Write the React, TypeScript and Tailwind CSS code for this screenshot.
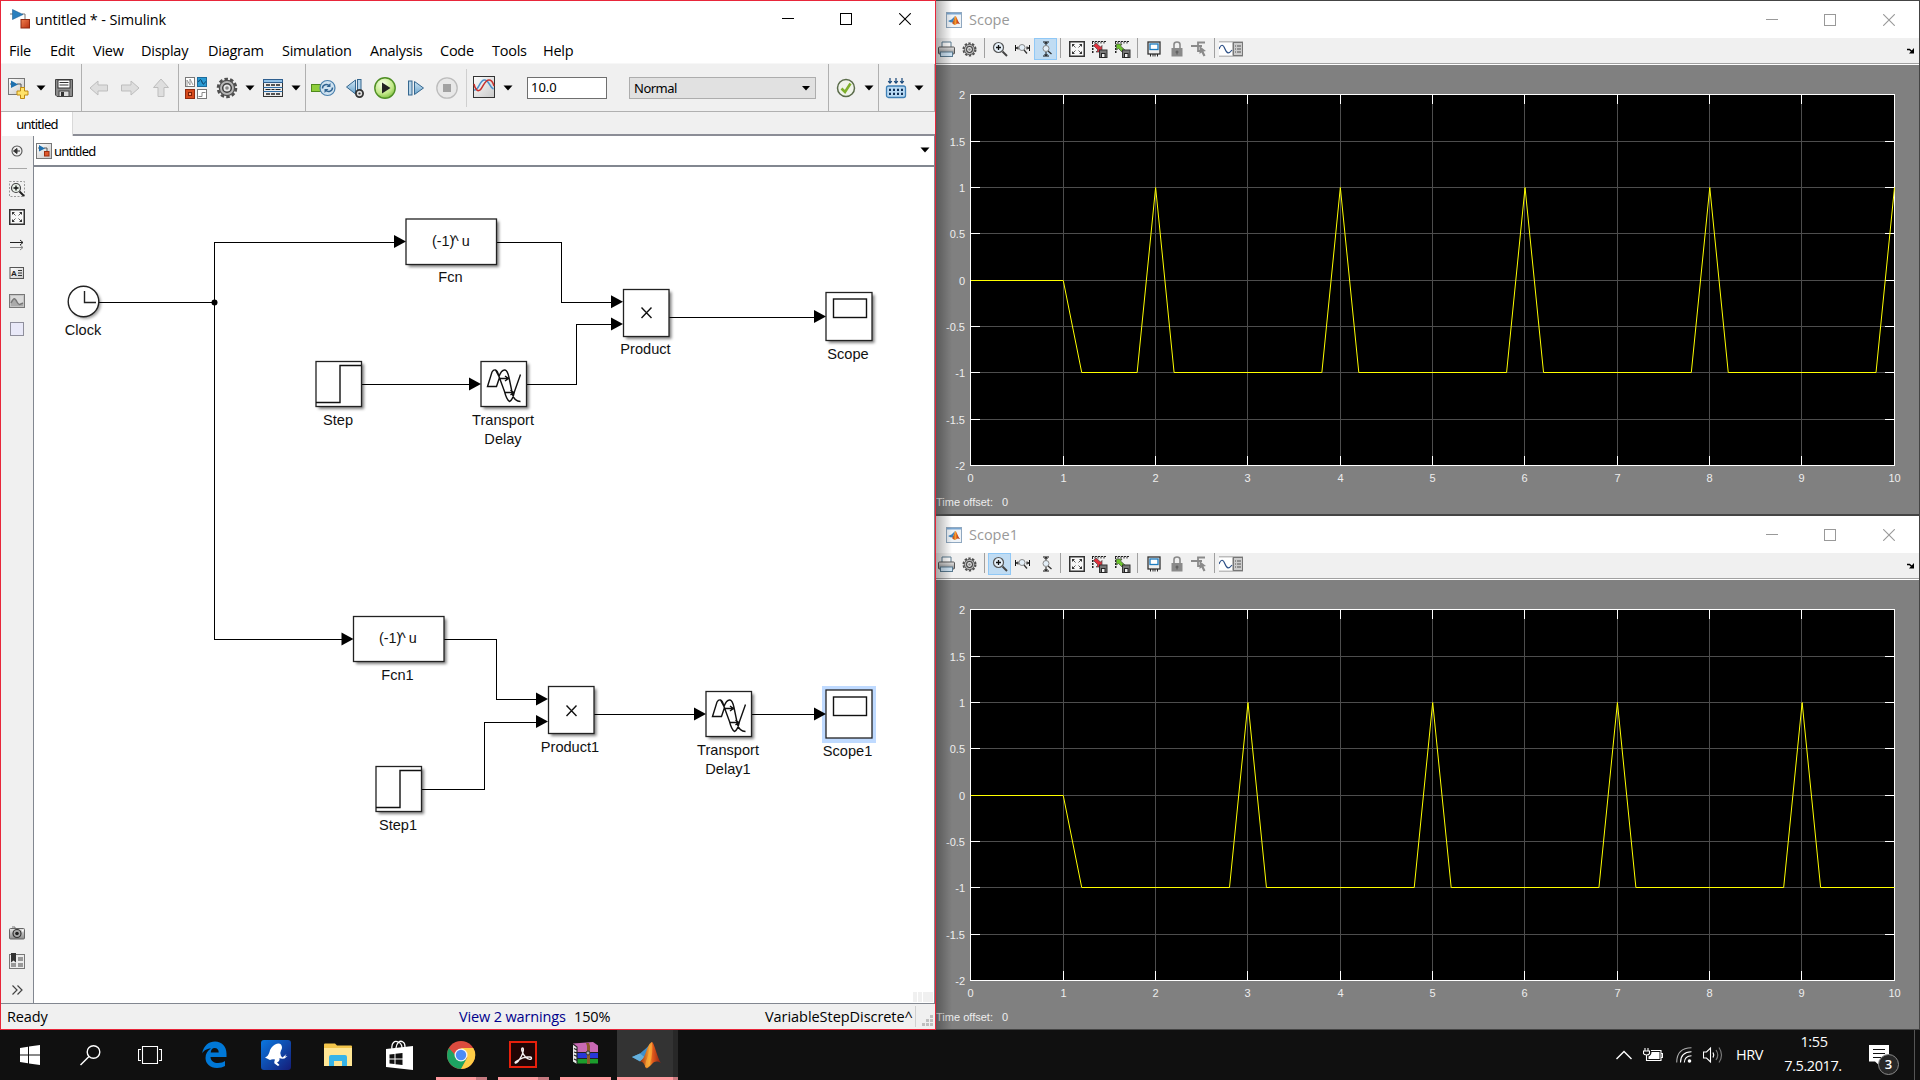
import React from "react";

type P = { className?: string };

const Caret = ({ className = "" }: P) => (
  <svg className={`shrink-0 ${className}`} width="10" height="6" viewBox="0 0 10 6">
    <path d="M0.5 0.5h9L5 5.5z" fill="#000" />
  </svg>
);

const Icon = ({ w, h, className = "", children }: { w: number; h: number; className?: string; children: React.ReactNode }) => (
  <svg className={`shrink-0 ${className}`} width={w} height={h} viewBox={`0 0 ${w} ${h}`} fill="none">
    {children}
  </svg>
);

const Defs = () => (
  <svg width="0" height="0" className="absolute">
    <defs>
      <linearGradient id="paper" x1="0" y1="0" x2="1" y2="1"><stop offset="0" stopColor="#fff" /><stop offset="1" stopColor="#c8c8c8" /></linearGradient>
      <linearGradient id="blue" x1="0" y1="0" x2="0" y2="1"><stop offset="0" stopColor="#cfe6f5" /><stop offset="1" stopColor="#6aa3cb" /></linearGradient>
      <linearGradient id="orange" x1="0" y1="0" x2="1" y2="1"><stop offset="0" stopColor="#f08050" /><stop offset="1" stopColor="#b83010" /></linearGradient>
      <linearGradient id="gray" x1="0" y1="0" x2="0" y2="1"><stop offset="0" stopColor="#e8e8e8" /><stop offset="1" stopColor="#8a8a8a" /></linearGradient>
      <radialGradient id="green" cx=".4" cy=".3" r=".8"><stop offset="0" stopColor="#f6ffe8" /><stop offset=".6" stopColor="#c3e889" /><stop offset="1" stopColor="#6db52a" /></radialGradient>
      <linearGradient id="flame" x1="0" y1="0" x2="1" y2="0"><stop offset="0" stopColor="#a02a10" /><stop offset=".45" stopColor="#f5a030" /><stop offset=".6" stopColor="#e05a1c" /><stop offset="1" stopColor="#8c1c10" /></linearGradient>
      <linearGradient id="fish" x1="0" y1="0" x2="1" y2="1"><stop offset="0" stopColor="#0a78e0" /><stop offset="1" stopColor="#151c78" /></linearGradient>
    </defs>
  </svg>
);

const SimulinkLogo = () => (
  <Icon w={20} h={20}>
    <path d="M12 5h3v6" stroke="#777" />
    <path d="M0 5h3" stroke="#777" />
    <path d="M2.500 .5L13 5.500 2.500 10.500z" fill="#2a7fbe" stroke="#1c5f96" strokeWidth=".6" />
    <rect x="11" y="10.500" width="8.500" height="8.500" fill="url(#orange)" stroke="#8f2810" />
  </Icon>
);

const MiniModel = () => (
  <Icon w={16} h={16}>
    <rect x=".5" y=".5" width="15" height="15" fill="url(#paper)" stroke="#777" />
    <path d="M2 5h2M8 5h3v4" stroke="#555" />
    <path d="M3 2l6 3.500L3 8.500z" fill="#1d6fae" />
    <rect x="8.500" y="8.500" width="4.500" height="4.500" fill="#e0582c" stroke="#9c2f10" />
  </Icon>
);

const WindowControls = ({ color, className = "" }: { color: string; className?: string }) => (
  <div className={`flex items-center gap-[46px] ${className}`}>
    <Icon w={12} h={12}><path d="M0 5.500h12" stroke={color} /></Icon>
    <Icon w={12} h={12}><rect x=".5" y=".5" width="11" height="11" stroke={color} /></Icon>
    <Icon w={12} h={12} className="ml-px"><path d="M.2 .2l11.600 11.600M11.800 .2L.2 11.800" stroke={color} strokeWidth="1.100" /></Icon>
  </div>
);

const Gear = ({ s }: { s: number }) => (
  <svg width={s} height={s} viewBox="0 0 22 22" className="shrink-0" fill="none">
    <circle cx="11" cy="11" r="9" stroke="#4f4f4f" strokeWidth="2.600" strokeDasharray="3.500 2.155" />
    <circle cx="11" cy="11" r="7.600" fill="#b5b5b5" stroke="#4f4f4f" strokeWidth="1.300" />
    <circle cx="11" cy="11" r="4.300" fill="#e8e8e8" stroke="#3f3f3f" strokeWidth="1.500" />
    <circle cx="11" cy="11" r="1.800" fill="#888" />
  </svg>
);

const menus: [string, string][] = [
  ["File", "w-[41px]"], ["Edit", "w-[43px]"], ["View", "w-[48px]"], ["Display", "w-[67px]"], ["Diagram", "w-[74px]"],
  ["Simulation", "w-[88px]"], ["Analysis", "w-[70px]"], ["Code", "w-[52px]"], ["Tools", "w-[51px]"], ["Help", "w-[40px]"],
];

const Toolbar = () => (
  <div className="flex h-[49px] shrink-0 items-stretch border-b border-[#b0b0b0] border-t border-t-[#f7f7f7] bg-[#f0f0f0] [&>div]:flex [&>div]:items-center [&>div]:border-[#b0b0b0] [&>div]:pt-px">
    <div className="w-[81px] border-r">
      <Icon w={24} h={22} className="ml-[5px]">
        <rect x="2.500" y="1.500" width="16" height="16" fill="url(#paper)" stroke="#777" />
        <path d="M4 7h3M11 7h4v4" stroke="#555" />
        <path d="M5 3.500l7 4-7 3.500z" fill="#1d6fae" />
        <path d="M14.500 10.500h4v3.500h3.500v4h-3.500v3.500h-4V18H11v-4h3.500z" fill="#ffe36a" stroke="#c08a10" />
      </Icon>
      <Caret className="ml-[6px]" />
      <Icon w={20} h={20} className="ml-[8px]">
        <path d="M1.500 1.500h17v17H3l-1.500-1.500z" fill="#8c8c8c" stroke="#444" />
        <rect x="4" y="2" width="12" height="8" fill="#fff" stroke="#333" />
        <path d="M5.500 4.500h9M5.500 7h9" stroke="#333" strokeWidth="1.200" />
        <rect x="5" y="13" width="10" height="5.500" fill="#ddd" stroke="#444" />
        <rect x="7" y="14" width="3" height="4" fill="#333" />
      </Icon>
    </div>
    <div className="w-[97px] border-r">
      <Icon w={20} h={20} className="ml-[7px]"><path d="M1 10l8-7v4h9.500v6H9v4z" fill="#dedede" stroke="#bdbdbd" /></Icon>
      <Icon w={20} h={20} className="ml-[11px]"><path d="M19 10l-8-7v4H1.500v6H11v4z" fill="#dedede" stroke="#bdbdbd" /></Icon>
      <Icon w={20} h={20} className="ml-[11px]"><path d="M10 1l7.500 8.500H13v9H7v-9H2.500z" fill="#dedede" stroke="#bdbdbd" /></Icon>
    </div>
    <div className="w-[127px] border-r">
      <Icon w={24} h={24} className="ml-[5px]">
        <rect x="1.500" y="1.500" width="9" height="9" fill="#fff" stroke="#777" /><path d="M3 10V4l3 5V3l3 6" stroke="#999" />
        <rect x="13.500" y="1.500" width="9" height="9" fill="#2b9bd4" stroke="#1c6b9c" /><path d="M14.500 6c1.500-3.500 2.500-3 3.500 0s2 2.500 3.500-.5" stroke="#0a3a60" />
        <rect x="1.500" y="13.500" width="9" height="9" fill="#d64a1c" stroke="#8f2a10" /><rect x="4.500" y="16.500" width="3" height="3" fill="#ff9a70" stroke="#7a2008" />
        <rect x="13.500" y="13.500" width="9" height="9" fill="#fff" stroke="#777" /><path d="M14.500 20.500h3.500v-4h3.500" stroke="#888" />
      </Icon>
      <span className="ml-[8px]"><Gear s={22} /></span>
      <Caret className="ml-[7px]" />
      <Icon w={22} h={20} className="ml-[7px]">
        <rect x="1.500" y="1.500" width="19" height="17" fill="#ececec" stroke="#333" />
        <rect x="1.500" y="1.500" width="19" height="3" fill="#8fc0e6" stroke="#2f5f8f" />
        <path d="M4 7h4M9 7h4M14 7h4M4 16h4M9 16h4M14 16h4" stroke="#222" strokeWidth="1.400" />
        <path d="M1.500 9.500h19M1.500 13.500h19" stroke="#2f6fa8" />
        <path d="M3.500 11.500h5M9.500 11.500h3M13.500 11.500h5" stroke="#222" strokeWidth="1.200" />
      </Icon>
      <Caret className="ml-[7px]" />
    </div>
    <div className="w-[523px] border-r">
      <Icon w={26} h={22} className="ml-[4px]">
        <rect x="1.500" y="7.500" width="12" height="7" fill="#8fce3c" stroke="#4f8a1c" />
        <circle cx="17.500" cy="11" r="7.500" fill="#cfe2f0" stroke="#4a80ad" strokeWidth="1.200" />
        <path d="M12.500 11.500c0-4 4.500-5 7-2.500M22.500 10.500c0 4-4.500 5-7 2.500" stroke="#2f6391" strokeWidth="1.500" />
        <path d="M20.500 6v4h-4zM14.500 16v-4h4z" fill="#2f6391" />
      </Icon>
      <Icon w={22} h={22} className="ml-[9px]">
        <path d="M10.500 3v14L1.500 10z" fill="url(#blue)" stroke="#35678f" />
        <rect x="12.500" y="2.500" width="3.500" height="15" fill="#b5d3e8" stroke="#35678f" />
        <circle cx="14.500" cy="16.500" r="3.600" fill="#ddd" stroke="#333" strokeWidth="1.800" /><circle cx="14.500" cy="16.500" r="1.100" fill="#333" />
      </Icon>
      <Icon w={22} h={22} className="ml-[7px]">
        <circle cx="11" cy="11" r="10.200" fill="url(#green)" stroke="#4f8f24" strokeWidth="1.400" />
        <path d="M8 5.500l8.500 5.500L8 16.500z" fill="#222" />
      </Icon>
      <Icon w={18} h={20} className="ml-[11px]">
        <rect x="1.500" y="3" width="3.500" height="14" fill="#b5d3e8" stroke="#35678f" />
        <path d="M7.500 3.500v13l9-6.500z" fill="url(#blue)" stroke="#35678f" />
      </Icon>
      <Icon w={22} h={22} className="ml-[11px]">
        <circle cx="11" cy="11" r="10.200" fill="#e8e8e8" stroke="#bcbcbc" strokeWidth="1.300" />
        <rect x="7" y="7" width="8" height="8" fill="#a2a2a2" />
      </Icon>
      <span className="ml-[8px] h-[38px] w-px bg-[#cfcfcf]" />
      <Icon w={22} h={22} className="mb-[2px] ml-[6px]">
        <rect x=".5" y=".5" width="21" height="21" fill="url(#paper)" stroke="#333" />
        <path d="M1 14c5 1 5-9 10-10s5 7 9.500 9" stroke="#4a90cc" strokeWidth="1.500" />
        <path d="M1 8c1 5 4 9 7 5s4-9 8-9 4 4 5 6" stroke="#c8302c" strokeWidth="1.500" />
      </Icon>
      <Caret className="ml-[8px]" />
      <div className="ml-[14px] flex h-[22px] w-[80px] items-center border border-[#6f6f6f] bg-white pl-[3px] font-['Noto_Sans'] text-[13px]">10.0</div>
      <div className="ml-[22px] flex h-[22px] w-[187px] items-center justify-between border border-[#adadad] bg-[#e1e1e1] pl-[4px] pr-[5px] font-['Noto_Sans'] text-[13px]">
        <span className="mt-px tracking-[-0.5px]">Normal</span>
        <svg width="8" height="5" viewBox="0 0 8 5"><path d="M0 0h8L4 4.500z" /></svg>
      </div>
    </div>
    <div className="w-[50px] border-r">
      <Icon w={20} h={20} className="ml-[7px]">
        <circle cx="10" cy="10" r="8.500" fill="#f0f4ea" stroke="#5a6b4a" strokeWidth="1.500" />
        <path d="M5.500 10.500l3.500 3.500 5.500-8.500" stroke="#7fb02c" strokeWidth="2.600" />
      </Icon>
      <Caret className="ml-[8px]" />
    </div>
    <div className="flex-1 border-r">
      <Icon w={22} h={22} className="ml-[6px]">
        <path d="M5 1v4M11 1v4M17 1v4M3.200 4.200L5 6.200l1.800-2M9.200 4.200l1.800 2 1.800-2M15.200 4.200l1.800 2 1.800-2" stroke="#17477a" strokeWidth="1.200" />
        <rect x="1.500" y="9" width="19" height="11.500" rx="2" fill="#b9d9f2" stroke="#3e7fb5" strokeWidth="1.300" />
        <path d="M4 12.800h14M4 16.800h14" stroke="#0f3057" strokeWidth="2.200" strokeDasharray="2 2" />
      </Icon>
      <Caret className="ml-[7px]" />
    </div>
  </div>
);

const FitBox = () => (
  <>
    <rect x=".75" y=".75" width="14.500" height="14.500" fill="#f8f8f8" stroke="#333" strokeWidth="1.500" />
    <path d="M3 3h3L3 6zM13 3v3l-3-3zM3 13v-3l3 3zM13 13h-3l3-3z" fill="#333" />
    <path d="M4 4l2.500 2.500M12 4L9.500 6.500M4 12l2.500-2.500M12 12L9.500 9.500" stroke="#333" strokeWidth=".8" />
  </>
);

const Palette = () => (
  <div className="flex w-[32px] shrink-0 flex-col items-center bg-[#f0f0f0]">
    <Icon w={12} h={12} className="mt-[9px]"><circle cx="6" cy="6" r="5" stroke="#555" strokeWidth="1.100" /><path d="M9 6H5M6 3.500v5L2.500 6z" stroke="#333" fill="#333" /></Icon>
    <span className="mt-[11px] h-px w-[19px] bg-[#a8a8a8]" />
    <Icon w={16} h={16} className="mt-[12px]">
      <rect x=".5" y=".5" width="15" height="15" stroke="#999" strokeDasharray="2 1.500" />
      <circle cx="7" cy="7" r="4.500" fill="#e8f0e8" stroke="#444" strokeWidth="1.200" /><path d="M10.500 10.500l4.500 4.500" stroke="#222" strokeWidth="2" /><path d="M4.500 7h5M7 4.500v5" stroke="#111" strokeWidth="1.300" />
    </Icon>
    <Icon w={16} h={16} className="mt-[12px]"><FitBox /></Icon>
    <Icon w={16} h={16} className="mt-[12px]">
      <path d="M1 5.500h13M11 3l3 2.500L11 8" stroke="#222" /><path d="M1 10.500h13M11 8l3 2.500-3 2.500" stroke="#888" />
    </Icon>
    <Icon w={16} h={16} className="mt-[12px]">
      <rect x="1" y="2.500" width="13.500" height="11" fill="url(#paper)" stroke="#555" />
      <text x="2" y="11" fontSize="8" fontWeight="700" fill="#222" fontFamily="Liberation Sans, sans-serif">A</text>
      <path d="M9 5.500h4M9 8h4M9 10.500h4" stroke="#333" />
    </Icon>
    <Icon w={16} h={16} className="mt-[12px]">
      <rect x=".5" y="1.500" width="15" height="13" fill="#c4c4c4" stroke="#777" /><rect x="2" y="3" width="12" height="10" fill="#d9d9d9" /><path d="M2 10c3-6 4-5 6-1s4 2 6 1v3H2z" fill="#aaa" /><path d="M2 10c3-6 4-5 6-1s4 2 6 1" stroke="#777" strokeWidth="1.500" />
    </Icon>
    <span className="mt-[13px] h-[14px] w-[14px] border border-[#8f8f9c] bg-[#e9e9f8]" />
    <Icon w={16} h={14} className="mt-auto">
      <path d="M3 1h3v1.500" stroke="#777" /><rect x=".5" y="2.500" width="15" height="10.500" rx="1" fill="url(#gray)" stroke="#666" /><circle cx="8" cy="7.500" r="4" fill="#aaa" stroke="#333" strokeWidth="1.200" /><circle cx="8" cy="7.500" r="1.800" fill="#222" /><rect x="13" y="4" width="1.500" height="1.500" fill="#fff" />
    </Icon>
    <Icon w={16} h={16} className="mt-[13px]">
      <rect x=".5" y="1.500" width="15" height="14" fill="#ececec" stroke="#777" /><path d="M9 4h5v4H9zM9 10h5v4H9zM2 10h5v4H2z" fill="#999" /><path d="M2 0h5v9.500L4.500 7.500 2 9.500z" fill="#333" />
    </Icon>
    <Icon w={12} h={12} className="mb-[7px] mt-[15px]"><path d="M1.500 1.500L6 6l-4.500 4.500M6.500 1.500L11 6l-4.500 4.500" stroke="#444" strokeWidth="1.200" /></Icon>
  </div>
);

const Arrow = ({ x, y }: { x: number; y: number }) => <path d={`M${x - 12} ${y - 6.500}L${x} ${y}L${x - 12} ${y + 6.500}z`} fill="#000" />;

const Box = ({ x, y, w, h, shadow = true }: { x: number; y: number; w: number; h: number; shadow?: boolean }) => (
  <>
    {shadow && <rect x={x + 2.500} y={y + 2.500} width={w} height={h} fill="#000" opacity=".5" filter="url(#soft)" />}
    <rect x={x} y={y} width={w} height={h} fill="#fff" stroke="#222" strokeWidth="1.300" />
  </>
);

const Label = ({ x, y, children }: { x: number; y: number; children: string }) => (
  <text x={x} y={y + 5} textAnchor="middle" fontSize="14.600" fill="#111" fontFamily="Liberation Sans, Arial, sans-serif">{children}</text>
);

const Power = ({ x, y }: { x: number; y: number }) => (
  <text x={x} y={y} fontSize="14.400" fill="#111" fontFamily="Liberation Sans, Arial, sans-serif">(-1)<tspan dx="-2.500">^</tspan><tspan dx="-1"> u</tspan></text>
);

const DelayGlyph = ({ x, y }: { x: number; y: number }) => (
  <path
    transform={`translate(${x} ${y})`}
    d="M7 25L11.500 10.500Q13 8 15 8.500L19 16 16 25zM15 8.500Q17 9 18.500 15Q21 8 24.500 8.500Q27 9 28.500 16L32 33Q34 40 40 40M18.500 15L24 30Q26 38 29 40Q32 39 34 30L40 13M19 17h8M24.500 14.500l3.500 2.500-3.500 2.500M24 31h9M30 28.500l3 2.500-3 2.500"
    fill="none" stroke="#111" strokeWidth="1.400"
  />
);

const ScopeGlyph = ({ x, y }: { x: number; y: number }) => <rect x={x} y={y} width="33" height="18.500" fill="#fff" stroke="#111" strokeWidth="1.400" />;

const Diagram = () => (
  <svg width="900" height="836" viewBox="34 167 900 836" className="block bg-white">
    <defs><filter id="soft" x="-20%" y="-20%" width="140%" height="140%"><feGaussianBlur stdDeviation="1.600" /></filter></defs>
    <rect x="913" y="992" width="20" height="10" fill="#f0f0f0" /><path d="M917.500 992v10M922.500 992v10" stroke="#fff" />
    <g fill="none" stroke="#000" strokeWidth="1" shapeRendering="crispEdges">
      <path d="M99 302.500H214.500M394 242.500H214.500V639.500H345" />
      <path d="M496 242.500H561.500V302.500H615M362 384.500H472M527 384.500H576.500V324.500H615M669 317.500H818" />
      <path d="M444 639.500H496.500V699.500H540M422 789.500H484.500V722.500H540M594 714.500H698M752 714.500H818" />
    </g>
    <circle cx="214.500" cy="302.500" r="3" />
    <circle cx="85.500" cy="303.500" r="15.300" opacity=".4" filter="url(#soft)" />
    <circle cx="83.500" cy="301.500" r="15.300" fill="#fff" stroke="#222" strokeWidth="1.400" />
    <path d="M84.500 291v11.500H96" stroke="#222" strokeWidth="1.400" fill="none" />
    <Label x={83} y={329.500}>Clock</Label>

    <Box x={406} y={219} w={90.500} h={45.500} />
    <Power x={432} y={246} />
    <Label x={450.500} y={277}>Fcn</Label>
    <Arrow x={406} y={241.500} />

    <Box x={623.500} y={289.500} w={45.500} h={47} />
    <path d="M641.500 307.500l10 10.500M651.500 307.500l-10 10.500" stroke="#111" strokeWidth="1.400" />
    <Arrow x={623} y={301.700} /><Arrow x={623} y={324} />
    <Label x={645.500} y={349}>Product</Label>

    <Box x={826} y={292.500} w={46} h={48} />
    <ScopeGlyph x={833.500} y={299} />
    <Arrow x={826} y={316.500} />
    <Label x={848} y={354}>Scope</Label>

    <Box x={316} y={361.500} w={45.500} h={45} />
    <path d="M316 402.500H340V365.500H361" fill="none" stroke="#111" strokeWidth="1.400" />
    <Label x={338} y={420}>Step</Label>

    <Box x={481} y={361.500} w={45.500} h={45} />
    <DelayGlyph x={480.500} y={361.500} />
    <Arrow x={481} y={384} />
    <Label x={503} y={420}>Transport</Label>
    <Label x={503} y={439}>Delay</Label>

    <Box x={353.500} y={616.500} w={90.500} h={45} />
    <Power x={379} y={643} />
    <Label x={397.500} y={675}>Fcn1</Label>
    <Arrow x={353.500} y={639} />

    <Box x={548.500} y={686.500} w={45.500} h={47} />
    <path d="M566.500 705.500l10 10.500M576.500 705.500l-10 10.500" stroke="#111" strokeWidth="1.400" />
    <Arrow x={548} y={699} /><Arrow x={548} y={721.500} />
    <Label x={570} y={746.500}>Product1</Label>

    <Box x={376} y={766.500} w={45.500} h={45} />
    <path d="M376 807.500H400V770.500H421" fill="none" stroke="#111" strokeWidth="1.400" />
    <Label x={398} y={824.500}>Step1</Label>

    <Box x={706} y={691.500} w={45.500} h={45} />
    <DelayGlyph x={705.500} y={691.500} />
    <Arrow x={706} y={714} />
    <Label x={728} y={750}>Transport</Label>
    <Label x={728} y={769}>Delay1</Label>

    <rect x="822" y="686" width="54" height="57" fill="#bfdaff" />
    <Box x={826} y={690} w={46} h={48} shadow={false} />
    <ScopeGlyph x={833.500} y={697} />
    <Arrow x={826} y={714} />
    <Label x={847.500} y={751}>Scope1</Label>
  </svg>
);

const Simulink = () => (
  <section className="flex h-[1030px] w-[936px] shrink-0 flex-col border border-[#e8263a] bg-white font-['Open_Sans','Noto_Sans',sans-serif] text-[15px] text-black">
    <header className="flex h-[36px] shrink-0 items-center pl-[9px]">
      <SimulinkLogo />
      <span className="ml-[5px] mt-px whitespace-nowrap text-[14.5px] tracking-[-0.15px]">untitled * - Simulink</span>
      <WindowControls color="#000" className="ml-auto mr-[24px]" />
    </header>
    <nav className="flex h-[26px] shrink-0 items-center pl-[8px] pt-[2px] text-[14.5px] tracking-[-0.25px]">
      {menus.map(([m, w]) => <span key={m} className={`${w} shrink-0 whitespace-nowrap`}>{m}</span>)}
    </nav>
    <Toolbar />
    <div className="flex h-[24px] shrink-0 items-stretch bg-[#f0f0f0] pl-px">
      <div className="flex w-[71px] items-center justify-center border-r border-[#d9d9d9] bg-white pt-[2px] font-['Noto_Sans'] text-[13px] tracking-[-0.75px]">untitled</div>
      <div className="flex-1 border-b-2 border-[#8b8d96]" />
    </div>
    <div className="flex h-[867px] shrink-0">
      <Palette />
      <div className="flex flex-1 flex-col border-l border-r border-[#828790]">
        <div className="flex h-[31px] shrink-0 items-center border-b-2 border-[#828790] pl-[2px] pr-[4px]">
          <MiniModel />
          <span className="ml-[2px] mt-[3px] font-['Noto_Sans'] text-[13px] tracking-[-0.75px]">untitled</span>
          <Caret className="mb-[2px] ml-auto" />
        </div>
        <Diagram />
      </div>
    </div>
    <footer className="flex flex-1 items-center border-t border-[#828790] bg-[#f0f0f0] pl-[6px] text-[14.5px] tracking-[-0.15px]">
      <span className="mt-px w-[452px]">Ready</span>
      <span className="mt-px w-[115px] whitespace-nowrap text-[#00008b]">View 2 warnings</span>
      <span className="mt-px w-[191px]">150%</span>
      <span className="mt-px whitespace-nowrap tracking-[-0.05px]">VariableStepDiscrete^</span>
      <span className="ml-auto h-[21px] w-px bg-[#d0d0d0]" />
      <Icon w={11} h={11} className="ml-[6px] mr-[2px] mt-[8px]"><path d="M8 0h3v3H8zM4 4h3v3H4zM8 4h3v3H8zM0 8h3v3H0zM4 8h3v3H4zM8 8h3v3H8z" fill="#bfbfbf" /></Icon>
    </footer>
  </section>
);

const Cell = ({ active, children }: { active?: boolean; children: React.ReactNode }) => (
  <div className={`flex h-[22px] w-[23px] shrink-0 items-center justify-center border ${active ? "border-[#90c8f6] bg-[#c0dcf3]" : "border-transparent"}`}>{children}</div>
);
const Sep = () => <span className="ml-[3px] mr-[4px] h-[20px] w-px shrink-0 bg-[#a0a0a0] first-of-type:mr-[3px]" />;

const SaveAxes = ({ color, flip }: { color: string; flip?: boolean }) => (
  <Icon w={17} h={17}>
    <path d="M1 .5h15M1.500 1v12M4 .5v2M7 .5v2M10 .5v2M13 .5v2M1 5h2M1 8h2M1 11h2" stroke="#222" strokeDasharray="2 1" />
    <path d={flip ? "M2 3h6L6.500 5 11 9l-2.500 2.500L4.500 7.500 2.500 9z" : "M11 11H5L7 9 2.500 4.500 5 2l4.500 4L11 4.500z"} fill={color} stroke="#444" strokeWidth=".7" />
    <rect x="8.500" y="9" width="7.500" height="7.500" fill="#777" stroke="#333" /><rect x="10.500" y="12.500" width="3.500" height="4" fill="#eee" stroke="#222" />
  </Icon>
);

const Peak = () => (
  <svg width="16" height="16" viewBox="0 0 16 16">
    <rect x=".5" y=".5" width="15" height="15" fill="#eef3f8" stroke="#90a8c0" />
    <rect x="1" y="1" width="14" height="1.500" fill="#7aa6d0" />
    <path d="M2 9l3.500-1.500L9 4 7 10l-2 .5z" fill="#3a82bd" />
    <path d="M6 11C8 9 8.500 4 9.500 4s2.500 6 4.500 8c-2-1-3-.5-4 .5S8 13 6 11z" fill="url(#flame)" />
  </svg>
);

const plotX = (t: number) => 34.9 + t * 92.36;
const gridX = (t: number) => Math.floor(34.7 + t * 92.35) + 0.5;
const gridY = (v: number) => Math.floor(29.7 + (2 - v) * 92.75) + 0.5;

const Plot = ({ data }: { data: [number, number][] }) => (
  <svg width="983" height="449" viewBox="0 0 983 449" className="block bg-[#808080]" fontFamily="Liberation Sans, Arial, sans-serif" fontSize="11" fill="#eee">
    <rect x="34" y="29" width="925" height="372" fill="#000" />
    <g shapeRendering="crispEdges" fill="none">
      {[1, 2, 3, 4, 5, 6, 7, 8, 9].map((t) => (
        <g key={t}>
          <path d={`M${gridX(t)} 30V400`} stroke="#4d4d4d" />
          <path d={`M${gridX(t)} 30v9M${gridX(t)} 391v9`} stroke="#fff" />
        </g>
      ))}
      {[1.5, 1, 0.5, 0, -0.5, -1, -1.5].map((v) => (
        <g key={v}>
          <path d={`M35 ${gridY(v)}H958`} stroke="#4d4d4d" />
          <path d={`M35 ${gridY(v)}h9M949 ${gridY(v)}h9`} stroke="#fff" />
        </g>
      ))}
      <rect x="34.500" y="29.500" width="924" height="371" stroke="#fff" />
    </g>
    <polyline points={data.map(([t, v]) => `${plotX(t)},${gridY(v)}`).join(" ")} fill="none" stroke="#ff0" strokeWidth="1" />
    {[0, 1, 2, 3, 4, 5, 6, 7, 8, 9, 10].map((t) => <text key={t} x={gridX(t)} y="417" textAnchor="middle">{t}</text>)}
    {[2, 1.5, 1, 0.5, 0, -0.5, -1, -1.5, -2].map((v) => <text key={v} x="29" y={gridY(v) + 4.7} textAnchor="end">{v}</text>)}
    <text x="0" y="441" textLength="57">Time offset:</text>
    <text x="66" y="441">0</text>
  </svg>
);

const ScopeWindow = ({ title, active, data }: { title: string; active: number; data: [number, number][] }) => (
  <section className="relative flex h-[515px] flex-col overflow-hidden border-r border-t border-b border-[#444] bg-white">
    <header className="flex h-[37px] shrink-0 items-center pl-[10px]">
      <Peak />
      <span className="ml-[7px] font-['Open_Sans'] text-[14.5px] text-[#999]">{title}</span>
      <WindowControls color="#999" className="ml-auto mr-[24px]" />
    </header>
    <div className="-ml-px flex h-[25px] shrink-0 items-start bg-[#f0f0f0]">
      <Cell><Icon w={17} h={17}>
        <path d="M4 6V1h9v5" fill="#fff" stroke="#5a7a90" /><rect x=".5" y="6" width="16" height="7" rx="1" fill="url(#gray)" stroke="#555" /><rect x="2.500" y="11" width="12" height="4.500" fill="#cfe4f4" stroke="#5a7a90" />
      </Icon></Cell>
      <Cell><Gear s={15} /></Cell>
      <Sep />
      <Cell active={active === 0}><Icon w={16} h={16}>
        <circle cx="6.500" cy="6.500" r="5" fill="#e4eff8" stroke="#555" strokeWidth="1.200" /><path d="M4 6.500h5M6.500 4v5" stroke="#111" strokeWidth="1.300" /><path d="M10.500 10.500l4.500 4.500" stroke="#444" strokeWidth="2" />
      </Icon></Cell>
      <Cell><Icon w={17} h={12}>
        <path d="M1.500 2v6M15.500 2v6M2 5h3M15 5h-3M4 3.500L2.500 5 4 6.500M13 3.500L14.500 5 13 6.500" stroke="#111" /><circle cx="8" cy="4.500" r="3" fill="#e4eff8" stroke="#888" /><path d="M10 7l3 3.500" stroke="#333" strokeWidth="1.300" />
      </Icon></Cell>
      <Cell active={active === 2}><Icon w={14} h={16}>
        <path d="M4 1h6M4 15h6M7 1v4M7 15v-4M5.500 3L7 1.500 8.500 3M5.500 13L7 14.500 8.500 13" stroke="#111" /><circle cx="7" cy="7.500" r="3" fill="#e4eff8" stroke="#888" /><path d="M9 10l3.500 3" stroke="#333" strokeWidth="1.300" />
      </Icon></Cell>
      <Sep />
      <Cell><Icon w={16} h={16}><FitBox /></Icon></Cell>
      <Cell><SaveAxes color="#e0303c" /></Cell>
      <Cell><SaveAxes color="#6cc42c" flip /></Cell>
      <Sep />
      <Cell><Icon w={14} h={16}>
        <rect x="1" y="1" width="12" height="12" fill="#eee" stroke="#333" strokeWidth="1.300" /><rect x="3" y="3" width="8" height="5.500" fill="#fff" stroke="#1c7cc0" strokeWidth="1.300" /><path d="M3.500 13v2.500M6 13v2.500M8 13v2.500M10.500 13v2.500" stroke="#222" />
      </Icon></Cell>
      <Cell><Icon w={12} h={16}>
        <path d="M3 8V3.500Q3 1 6 1t3 2.500V8" stroke="#8a8a8a" strokeWidth="1.600" /><rect x=".5" y="7" width="11" height="8.500" fill="#8a8a8a" /><path d="M6 9.500v4M4.500 11h3" stroke="#555" />
      </Icon></Cell>
      <Cell><Icon w={17} h={16}>
        <path d="M0 5h6M6 5h5M7 5v5h3M7 5V1.500h7" stroke="#8a8a8a" strokeWidth="1.800" /><path d="M8.500 5l6.500 5-2.500.5 2 4-2 1-2-4-2 1.500z" fill="#8a8a8a" />
      </Icon></Cell>
      <Sep />
      <div className="flex h-[22px] items-center"><Icon w={24} h={16}>
        <rect x="0" y="0" width="24" height="16" fill="#bcbcbc" /><rect x="0" y="1.500" width="13" height="13" fill="#fff" /><path d="M0 8C2 3 4 3 6 8s4 5 7 1" stroke="#2c4f86" strokeWidth="1.200" /><rect x="14.500" y="1.500" width="9" height="13" fill="#ccc" stroke="#777" /><path d="M16 5h1M16 8h1M16 11h1M18 5h4M18 8h4M18 11h4" stroke="#555" />
      </Icon></div>
      <Icon w={8} h={6} className="ml-auto mr-[4px] mt-[10px]"><path d="M0 1.500h2.500L6 4.500" stroke="#000" strokeWidth="1.500" /><path d="M7 0v5.500H2z" fill="#000" /></Icon>
    </div>
    <div className="h-[2px] shrink-0 border-b border-white bg-[#a0a0a0]" />
    <Plot data={data} />
    <div className="absolute inset-y-0 left-0 w-[16px] bg-gradient-to-r from-black/30 to-transparent" />
  </section>
);

const pulses = (peaks: number[]): [number, number][] => [
  [0, 0], [1, 0], [1.2, -1],
  ...peaks.flatMap((p): [number, number][] => (p === 10 ? [[9.8, -1], [10, 1]] : [[p - 0.2, -1], [p, 1], [p + 0.2, -1]])),
];

const Underline = ({ a, b }: { a: string; b?: string }) => (
  <div className="mt-auto flex h-[3px] w-full"><span className={`${a} h-full bg-[#ff9a9f]`} />{b && <span className={`${b} h-full bg-[#c67a80]`} />}</div>
);

const Task = ({ className, a, b, children }: { className: string; a: string; b?: string; children: React.ReactNode }) => (
  <div className={`flex h-[50px] shrink-0 flex-col ${className}`}>
    <div className="mt-[10px] h-[30px] pl-[10px]">{children}</div>
    <Underline a={a} b={b} />
  </div>
);

const Taskbar = () => (
  <footer className="flex h-[50px] w-full items-center bg-[#101010] font-['Open_Sans','Noto_Sans',sans-serif] text-white">
    <Icon w={20} h={20} className="ml-[20px]"><path d="M0 3l8-1.200V9.500H0zM9 1.600L20 0v9.500H9zM0 10.500h8v7.700L0 17zM9 10.500h11V20L9 18.400z" fill="#fff" /></Icon>
    <Icon w={21} h={21} className="ml-[40px]"><circle cx="13.500" cy="7" r="6.300" stroke="#fff" strokeWidth="1.400" /><path d="M9 11.500L.5 20" stroke="#fff" strokeWidth="1.400" /></Icon>
    <Icon w={24} h={20} className="ml-[37px]"><path d="M4.500 1.500h15v17h-15zM3 4.500H.5v11H3M21 4.500h2.500v11H21" stroke="#fff" strokeWidth="1.100" /></Icon>
    <Icon w={25} h={28} className="ml-[40px]">
      <path d="M0 12.500C2 4 7 .5 13 .5c7 0 11.500 5 11.500 12v3.500h-16c.3 4 3.500 6 7.500 6 3 0 5.500-1 7-2v5c-2 1.200-5 2-8 2C8 27 3.500 22.500 3.500 17c0-4 2-7.500 5.500-9.500C4.500 7.500 1.500 10 0 12.500zM8.700 11.500h8c0-3-1.500-4.500-4-4.500s-3.800 2-4 4.500z" fill="#0078d7" fillRule="evenodd" />
    </Icon>
    <Icon w={30} h={30} className="ml-[34px]">
      <rect width="30" height="30" rx="3" fill="url(#fish)" />
      <path d="M14 4.500Q18 2.500 20 4.500Q22 7.500 20 10.500Q18.500 13 20 16L21.500 17.500L25.500 14L24 16.500L26.500 16L23.500 18.500Q20 19 18.500 18Q19 21 16 22.500L18.500 25L17 26L13.500 23.500Q13 21.500 14 19.500Q11 19 9 20L4 17.500Q7 16.500 8.500 12Q9.500 7 14 4.500z" fill="#fff" />
    </Icon>
    <Icon w={28} h={24} className="ml-[33px]">
      <path d="M0 1.500Q0 .5 1 .5h10l2 2h14q1 0 1 1V22H0z" fill="#f3c54a" /><path d="M0 5h28v18H0z" fill="#ffe694" /><path d="M5 23v-9q0-2 2-2h14q2 0 2 2v9h-5v-5h-8v5z" fill="#36b4e8" />
    </Icon>
    <Icon w={27} h={30} className="ml-[34px]">
      <path d="M6 9C5 3 9 0 12 2c3 1 4 4 4 6M10 8c1-6 4-8 7-6 2 1 2 3 2 5" stroke="#fff" strokeWidth="1.300" /><path d="M0 9l27-3v24L0 27z" fill="#fff" /><path d="M3.500 14.500l5-.6v4.600h-5zM9.500 13.700l7-.8v5.600h-7zM3.500 19.500h5V24l-5-.6zM9.500 19.500h7V25l-7-.8z" fill="#101010" />
    </Icon>
    <Task className="ml-[23px] w-[51px]" a="w-[40px]" b="w-[11px]">
      <Icon w={30} h={30}>
        <circle cx="15" cy="15" r="14" fill="#dd4b3e" />
        <path d="M2.900 8A14 14 0 0 0 15 29l6-10.500-6 .5-5-3z" fill="#1da462" /><path d="M15 29A14 14 0 0 0 27.300 8H15l6.300 9.500z" fill="#ffcd46" />
        <circle cx="15" cy="15" r="6.500" fill="#f4f4f4" /><circle cx="15" cy="15" r="5.200" fill="#4c8bf5" />
      </Icon>
    </Task>
    <Task className="ml-[11px] w-[51px]" a="w-[40px]" b="w-[11px]">
      <Icon w={30} h={30}>
        <rect x="2" y="2" width="26" height="25" fill="#200404" stroke="#e8200c" strokeWidth="2" />
        <path d="M14.500 8c-2 0 0 6 3 9s6 3 6 1-8-1-12 1.500-5 3-4 3.500 4-3 6-7 2.500-8 1-8z" stroke="#f4f0f0" strokeWidth="1.400" />
      </Icon>
    </Task>
    <Task className="ml-[11px] w-[51px]" a="w-[51px]">
      <Icon w={30} h={30}>
        <path d="M3 3.500L23 2l5 3.500V12H7l-4-2z" fill="#c869b4" /><path d="M3 11l4 2h21v5H7l-4-1.500z" fill="#2838d8" /><path d="M3 17.500L7 19h21v4.500H7l-4-2z" fill="#1c9c2c" />
        <path d="M3 4l4 3v17l-4-2.500z" fill="#e8e8e8" /><path d="M3 4l4 3v17M4 8.500l3 1.500M4 12l3 1M4 15l3 1.500M4 19l3 1.500M7 12.500h21M7 18.500h21" stroke="#222" strokeWidth="1.100" />
        <path d="M16 3h3l1 3v18h-3V6z" fill="#8a5a2c" /><circle cx="18" cy="13" r="2" fill="#aaa" stroke="#333" />
      </Icon>
    </Task>
    <Task className="ml-[6px] w-[61px] bg-[linear-gradient(90deg,#333_56px,#282828_56px)]" a="w-[56px]" b="w-[5px]">
      <svg width="34" height="30" viewBox="0 0 34 30" className="ml-[5px]">
        <path d="M0 17l8-3.500Q14 9 20 2l-4 13-8 6z" fill="#3f8fcb" /><path d="M0 17l8-3.500 5 4-5 4z" fill="#65b0dc" />
        <path d="M8 21.500c6-3 7-18 12-19.500 2 0 5 15 9 21-4-2-6-2-9 1s-5 5-6 4-2-7-6-6.500z" fill="url(#flame)" />
        <path d="M20 2c-3 2-3 14-6 19l-1 6c2 1 4 0 5-4 2-6 3-14 2-21z" fill="#ffb43c" opacity=".6" />
      </svg>
    </Task>
    <Icon w={16} h={10} className="ml-auto"><path d="M.5 9L8 1.500 15.500 9" stroke="#fff" strokeWidth="1.400" /></Icon>
    <Icon w={20} h={14} className="ml-[11px]"><path d="M2 0v3M5 0v3M.5 3h6v2.500Q6 7 3.500 7T.5 5.500zM3.500 7v5.500h2" stroke="#fff" strokeWidth="1.100" /><path d="M8 2.500h10v10H5M18 5.500h1.500v4H18" stroke="#fff" strokeWidth="1.100" /><path d="M8.500 4H16.500v7H5.500V8.500Q8.500 7 8.500 4z" fill="#fff" /></Icon>
    <Icon w={16} h={16} className="ml-[13px]"><path d="M.7 15.500Q.7 1 15.500.8" stroke="#aaa" strokeWidth="1.100" /><path d="M4.500 15.500Q4.500 5 15.500 4.700M8.300 15.500Q8.500 9 15.500 8.700" stroke="#fff" strokeWidth="1.100" /><circle cx="13.500" cy="14" r="1.800" fill="#fff" /></Icon>
    <Icon w={21} h={18} className="ml-[11px]"><path d="M.5 6h3l4-4v14l-4-4h-3z" stroke="#fff" strokeWidth="1.100" /><path d="M10 6.500q1.500 2.500 0 5" stroke="#fff" strokeWidth="1.200" /><path d="M13 4q3.500 5 0 10M16 1.500q5 7.500 0 15" stroke="#777" strokeWidth="1.200" /></Icon>
    <span className="ml-[12px] w-[29px] text-[14.5px] tracking-[-0.4px]">HRV</span>
    <div className="ml-[13px] flex w-[72px] flex-col items-center text-[14.5px] leading-[24px] tracking-[-0.4px]"><span className="-mt-px">1:55</span><span className="mb-px whitespace-nowrap pr-[2px]">7.5.2017.</span></div>
    <div className="relative ml-[19px] mr-[25px] h-[30px] w-[20px] pt-[5px]">
      <Icon w={20} h={21}><path d="M0 0h20v16.500h-9V21l-5-4.500H0z" fill="#fff" /><path d="M4 4.500h12M4 8.500h12M4 12.500h8" stroke="#101010" strokeWidth="1.200" /></Icon>
      <span className="absolute left-[9px] top-[14px] flex h-[21px] w-[21px] items-center justify-center rounded-full border border-[#8a8a8a] bg-[#282828] text-[13px] font-semibold leading-none">3</span>
    </div>
    <span className="mr-[5px] h-full w-px bg-[#555]" />
  </footer>
);

export default function App() {
  return (
    <div className="flex h-[1080px] w-[1920px] flex-col overflow-hidden bg-[#101010]">
      <Defs />
      <div className="flex h-[1030px]">
        <Simulink />
        <div className="flex flex-1 flex-col">
          <ScopeWindow title="Scope" active={2} data={pulses([2, 4, 6, 8, 10])} />
          <ScopeWindow title="Scope1" active={0} data={[...pulses([3, 5, 7, 9]), [10, -1]]} />
        </div>
      </div>
      <Taskbar />
    </div>
  );
}
